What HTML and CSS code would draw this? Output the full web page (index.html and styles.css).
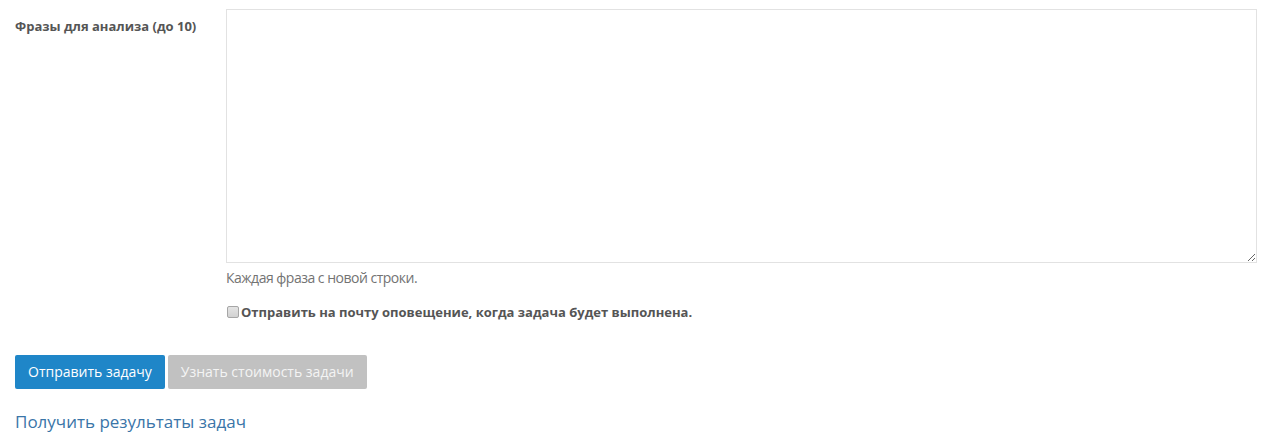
FILE: index.html
```html
<!DOCTYPE html>
<html lang="ru">
<head>
<meta charset="utf-8">
<link rel="stylesheet" href="styles.css">
</head>
<body>
<form class="form">
  <div class="row">
    <label class="label" for="phrases">Фразы для анализа (до 10)</label>
    <div class="field">
      <textarea id="phrases" class="textarea"></textarea>
      <p class="help">Каждая фраза с новой строки.</p>
      <label class="check"><input type="checkbox" class="checkbox">Отправить на почту оповещение, когда задача будет выполнена.</label>
    </div>
  </div>
  <div class="actions">
    <button type="button" class="btn btn-primary">Отправить задачу</button>
    <button type="button" class="btn btn-disabled">Узнать стоимость задачи</button>
  </div>
  <a class="link" href="#">Получить результаты задач</a>
</form>
</body>
</html>
```
FILE: styles.css
```css
html, body {
  margin: 0;
  padding: 0;
  background: #fff;
}
body {
  font-family: "Open Sans", "Liberation Sans", sans-serif;
  color: #555;
  font-size: 13px;
}
.form {
  padding: 9px 16px 0 15px;
}
.row {
  display: grid;
  grid-template-columns: 211px 1fr;
}
.label {
  font-weight: 700;
  font-size: 13px;
  color: #555;
  padding-top: 8px;
  line-height: 18px;
}
.field {
  display: flex;
  flex-direction: column;
}
.textarea {
  display: block;
  box-sizing: border-box;
  width: 100%;
  height: 254px;
  margin: 0;
  border: 1px solid #e2e2e2;
  border-radius: 0;
  background: #fff;
  resize: vertical;
}
.help {
  margin: 5px 0 0 0;
  font-size: 14px;
  line-height: 20px;
  letter-spacing: -0.5px;
  color: #737373;
}
.check {
  display: flex;
  align-items: center;
  margin-top: 15px;
  font-weight: 700;
  font-size: 13px;
  line-height: 18px;
  color: #555;
}
.checkbox {
  appearance: none;
  -webkit-appearance: none;
  box-sizing: border-box;
  margin: 0 2px 0 1px;
  width: 12px;
  height: 12px;
  border: 1px solid #a6a6a6;
  border-radius: 2px;
  background: linear-gradient(#e4e4e4, #d2d2d2);
}
.actions {
  display: flex;
  gap: 3px;
  margin-top: 34px;
}
.btn {
  font-family: "Open Sans", "Liberation Sans", sans-serif;
  font-size: 14px;
  line-height: 20px;
  padding: 7px 13px;
  border: 0;
  border-radius: 2px;
  cursor: pointer;
}
.btn-primary {
  background: #1f86c8;
  color: #fff;
}
.btn-disabled {
  background: #c1c1c1;
  color: #f4f4f4;
}
.link {
  display: inline-block;
  margin-top: 21px;
  font-size: 17px;
  line-height: 24px;
  color: #3a75a8;
  text-decoration: none;
}
```
